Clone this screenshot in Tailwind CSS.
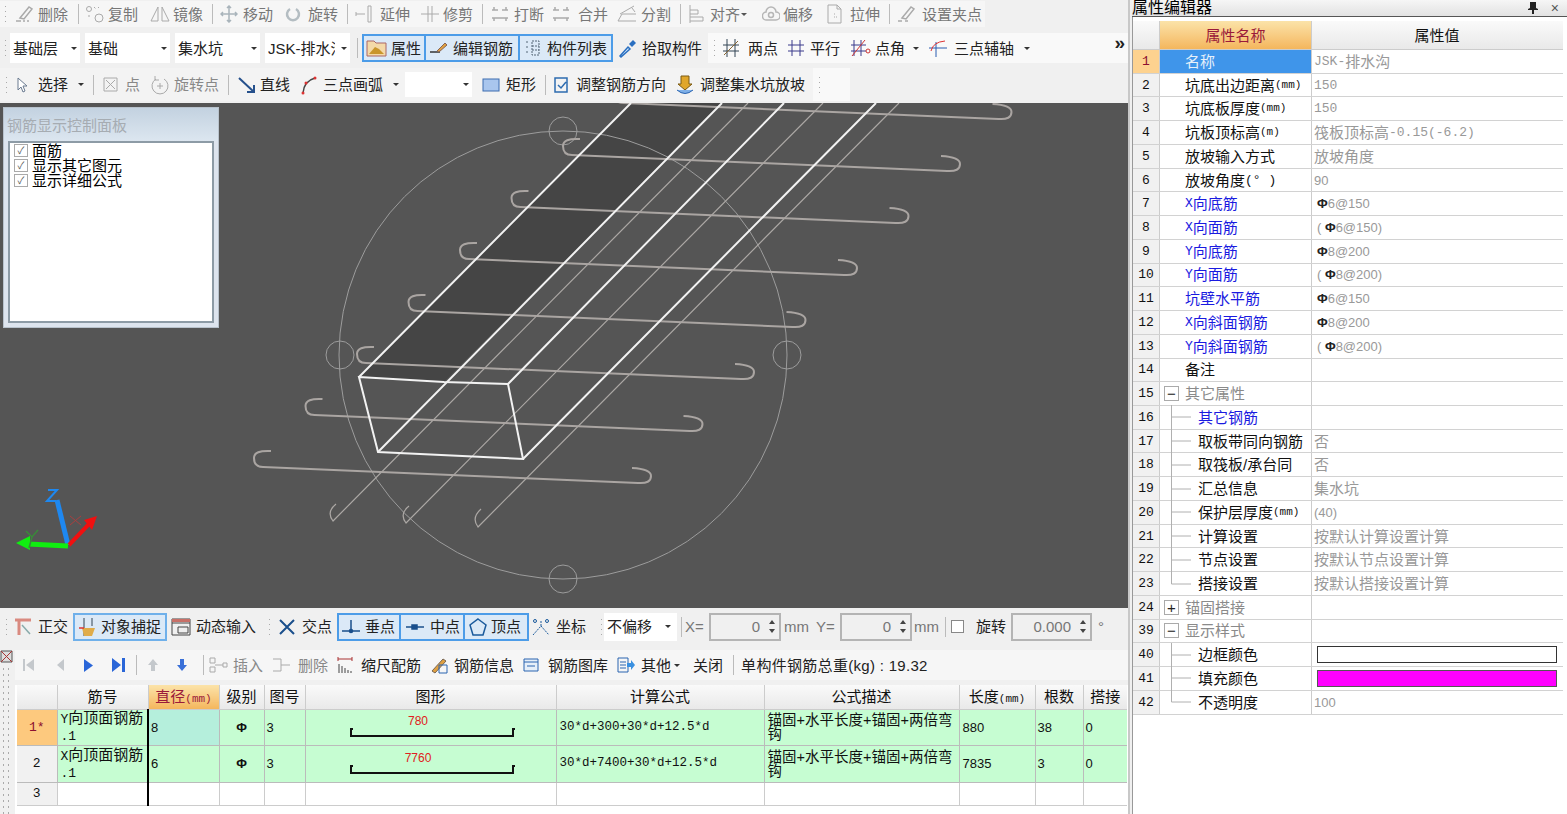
<!DOCTYPE html>
<html lang="zh-CN">
<head>
<meta charset="UTF-8">
<title>属性编辑器</title>
<script src="https://cdn.jsdelivr.net/npm/@tailwindcss/browser@4"></script>
</head>
<body class="w-[1567px] h-[814px] overflow-hidden bg-[#f0f0f0] text-[15px] leading-none text-[#222] font-['Liberation_Sans','Noto_Sans_CJK_SC',sans-serif]">
<div class="flex h-full">

<!-- left: toolbars, view, rebar table -->
<div class="w-[1128px] h-full flex flex-col shrink-0">

  <!-- toolbar 1 -->
  <div class="h-[33px] shrink-0 pt-[1px]">
    <div class="flex items-center h-[26px] w-[985px] bg-[#f6f6f6] text-[#777]">
      <div class="w-[15px] pl-[4px]"><div class="w-[3px] h-[20px] bg-[radial-gradient(circle,#aaa_1px,transparent_1px)] bg-[length:3px_5px]"></div></div>
      <div class="flex items-center w-[63px]"><svg width="20" height="20" viewBox="0 0 20 20" fill="none" stroke="#aaa" stroke-width="1.5"><path d="M1 17h5M8 17h2M12 17h2M5 14l9-11 3 2-8 10z"/></svg><span class="ml-[3px]">删除</span></div>
      <i class="w-[7px] h-[20px] border-l border-[#bbb]"></i>
      <div class="flex items-center w-[64px]"><svg width="20" height="20" viewBox="0 0 20 20" fill="none" stroke="#aaa"><circle cx="4" cy="5" r="2.5"/><circle cx="14" cy="14" r="4"/><path d="M9 3l2 2M13 3l1 1M4 11v3" stroke-dasharray="2 1"/></svg><span class="ml-[3px]">复制</span></div>
      <div class="flex items-center w-[63px]"><svg width="22" height="20" viewBox="0 0 22 20" fill="none" stroke="#aaa"><path d="M9 3L2 17h7zM13 3l7 14h-7z"/></svg><span class="ml-[2px]">镜像</span></div>
      <i class="w-[8px] h-[20px] border-l border-[#bbb]"></i>
      <div class="flex items-center w-[65px]"><svg width="18" height="18" viewBox="0 0 18 18" fill="none" stroke="#a9b4bb" stroke-width="1.5"><path d="M9 1v16M1 9h16M7 3l2-2 2 2M7 15l2 2 2-2M3 7L1 9l2 2M15 7l2 2-2 2"/></svg><span class="ml-[5px]">移动</span></div>
      <div class="flex items-center w-[62px]"><svg width="16" height="18" viewBox="0 0 16 18" fill="none" stroke="#b4bdc2" stroke-width="2.5"><path d="M5 4a6 6 0 1 0 6 0"/></svg><span class="ml-[7px]">旋转</span></div>
      <i class="w-[8px] h-[20px] border-l border-[#bbb]"></i>
      <div class="flex items-center w-[65px]"><svg width="18" height="20" viewBox="0 0 18 20" fill="none" stroke="#aaa"><path d="M1 10h9M1 8v4M13 2h3v16h-3z"/></svg><span class="ml-[7px]">延伸</span></div>
      <div class="flex items-center w-[62px]"><svg width="20" height="20" viewBox="0 0 20 20" fill="none" stroke="#aaa"><path d="M1 10h18M8 2v16M12 2v16"/></svg><span class="ml-[3px]">修剪</span></div>
      <i class="w-[8px] h-[20px] border-l border-[#bbb]"></i>
      <div class="flex items-center w-[60px]"><svg width="20" height="20" viewBox="0 0 20 20" fill="none" stroke="#aaa" stroke-width="1.5"><path d="M2 6h6M12 6h6M2 14h16M4 3v3M16 3v3M4 14v3M16 14v3"/></svg><span class="ml-[4px]">打断</span></div>
      <div class="flex items-center w-[67px]"><svg width="22" height="20" viewBox="0 0 22 20" fill="none" stroke="#aaa" stroke-width="1.5"><path d="M3 6h6M13 6h6M3 14h16M5 3v3M17 3v3M5 14v3M17 14v3"/></svg><span class="ml-[6px]">合并</span></div>
      <div class="flex items-center w-[63px]"><svg width="20" height="20" viewBox="0 0 20 20" fill="none" stroke="#aaa"><path d="M1 17h18M1 17l4-7h14M3 10l14-8M15 4l3 4"/></svg><span class="ml-[4px]">分割</span></div>
      <i class="w-[8px] h-[20px] border-l border-[#bbb]"></i>
      <div class="flex items-center w-[74px]"><svg width="16" height="20" viewBox="0 0 16 20" fill="none" stroke="#aaa"><path d="M2 1v18M2 6h8v4H2M2 13h13v4H2"/></svg><span class="ml-[6px]">对齐</span><i class="ml-[1px] border-x-[3px] border-t-[3px] border-x-transparent border-t-[#555]"></i></div>
      <div class="flex items-center w-[63px]"><svg width="18" height="18" viewBox="0 0 18 18" fill="none" stroke="#b6b6b6" stroke-width="1.5"><path d="M5 15a4 4 0 0 1-1-8 5 5 0 0 1 10 0 4 4 0 0 1 0 8z"/><circle cx="9" cy="10" r="2.5"/></svg><span class="ml-[3px]">偏移</span></div>
      <div class="flex items-center w-[64px]"><svg width="20" height="20" viewBox="0 0 20 20" fill="none" stroke="#aaa"><path d="M3 1h9l4 4v14H3zM12 1v4h4"/><path d="M9 10h2M9 13h4" stroke-dasharray="1 1"/></svg><span class="ml-[5px]">拉伸</span></div>
      <i class="w-[8px] h-[20px] border-l border-[#bbb]"></i>
      <div class="flex items-center"><svg width="20" height="20" viewBox="0 0 20 20" fill="none" stroke="#aaa" stroke-width="1.5"><path d="M1 17h4M8 17h3M5 14l9-11 3 2-8 10z"/></svg><span class="ml-[5px]">设置夹点</span></div>
    </div>
  </div>

  <!-- toolbar 2 -->
  <div class="h-[33px] shrink-0 flex items-start">
    <div class="flex items-center h-[30px] w-[708px] shrink-0 bg-[#f0f0f0]">
      <div class="w-[10px] pl-[4px]"><div class="w-[3px] h-[20px] bg-[radial-gradient(circle,#aaa_1px,transparent_1px)] bg-[length:3px_5px]"></div></div>
      <div class="flex items-center justify-between w-[70px] h-[30px] pl-[3px] pr-[3px] bg-white">基础层<i class="border-x-[3px] border-t-[3px] border-x-transparent border-t-[#333]"></i></div>
      <div class="flex items-center justify-between w-[85px] h-[30px] ml-[5px] pl-[3px] pr-[3px] bg-white">基础<i class="border-x-[3px] border-t-[3px] border-x-transparent border-t-[#333]"></i></div>
      <div class="flex items-center justify-between w-[85px] h-[30px] ml-[5px] pl-[3px] pr-[3px] bg-white">集水坑<i class="border-x-[3px] border-t-[3px] border-x-transparent border-t-[#333]"></i></div>
      <div class="flex items-center justify-between w-[85px] h-[30px] ml-[5px] pl-[3px] pr-[3px] bg-white"><span class="w-[67px] overflow-hidden whitespace-nowrap">JSK-排水沟</span><i class="border-x-[3px] border-t-[3px] border-x-transparent border-t-[#333]"></i></div>
      <i class="w-[5px] ml-[7px] h-[20px] border-l border-[#bbb]"></i>
      <div class="flex items-center w-[64px] h-[28px] border-2 border-[#4c9ce8] bg-[#dbe9f7] pl-[2px] whitespace-nowrap"><svg class="shrink-0" width="22" height="20" viewBox="0 0 22 20"><path d="M1 3h7l2 2h10v13H1z" fill="#f4d9a8" stroke="#a66"/><path d="M3 16l6-7 4 2 5 5z" fill="#c9962c"/></svg><span class="ml-[3px]">属性</span></div>
      <div class="flex items-center w-[94px] h-[28px] border-2 border-l-0 border-[#4c9ce8] bg-[#dbe9f7] pl-[3px]"><svg width="20" height="18" viewBox="0 0 20 18" fill="none"><path d="M1 13h10" stroke="#333" stroke-width="1.5"/><path d="M8 12l8-8 2 2-8 7z" fill="#e0a040" stroke="#865"/></svg><span class="ml-[4px]">编辑钢筋</span></div>
      <div class="flex items-center w-[93px] h-[28px] border-2 border-l-0 border-[#4c9ce8] bg-[#dbe9f7] pl-[3px]"><svg width="20" height="18" viewBox="0 0 20 18" fill="none" stroke="#567"><path d="M9 2h7v14H9zM9 7h7M9 11h7M3 3h3M3 8h3M3 13h3" stroke-dasharray="2 1"/></svg><span class="ml-[4px]">构件列表</span></div>
      <div class="flex items-center ml-[5px]"><svg width="20" height="20" viewBox="0 0 20 20" fill="none"><path d="M2 18l8-9 2 2-9 8z" fill="#cfe6fa" stroke="#2a6fc0" stroke-width="1.5"/><path d="M11 6l4-4 3 3-4 4z" fill="#2a6fc0"/></svg><span class="ml-[4px]">拾取构件</span></div>
    </div>
    <div class="flex items-center h-[30px] flex-1 bg-[#f9f9f9]">
      <div class="w-[14px] pl-[5px]"><div class="w-[3px] h-[20px] bg-[radial-gradient(circle,#aaa_1px,transparent_1px)] bg-[length:3px_5px]"></div></div>
      <div class="flex items-center w-[65px]"><svg width="18" height="20" viewBox="0 0 18 20" fill="none" stroke="#345"><path d="M5 1v18M13 1v18M1 7h16M1 13h16"/><path d="M2 17L16 3" stroke="#863"/></svg><span class="ml-[8px]">两点</span></div>
      <div class="flex items-center w-[63px]"><svg width="18" height="20" viewBox="0 0 18 20" fill="none" stroke="#3a3a8c"><path d="M5 2v16M13 2v16M1 7h16M1 13h16"/></svg><span class="ml-[5px]">平行</span></div>
      <div class="flex items-center w-[78px]"><svg width="22" height="20" viewBox="0 0 22 20" fill="none" stroke="#3a3a8c"><path d="M4 2v16M11 2v16M1 7h15M1 13h15"/><path d="M2 18L15 2" stroke="#c33"/><circle cx="18" cy="13" r="2" stroke="#c33"/></svg><span class="ml-[3px]">点角</span><i class="ml-[8px] border-x-[3px] border-t-[3px] border-x-transparent border-t-[#333]"></i></div>
      <div class="flex items-center"><svg width="20" height="20" viewBox="0 0 20 20" fill="none"><path d="M8 4v15M1 10h18" stroke="#2a5db0"/><path d="M3 13Q5 4 17 3" stroke="#d33"/></svg><span class="ml-[6px]">三点辅轴</span><i class="ml-[10px] border-x-[3px] border-t-[3px] border-x-transparent border-t-[#333]"></i></div>
      <span class="ml-auto mr-[3px] mb-[12px] text-[19px] font-bold">»</span>
    </div>
  </div>

  <!-- toolbar 3 -->
  <div class="h-[37px] shrink-0 flex items-center bg-[#f0f0f0]">
    <div class="flex items-center w-[850px] h-[33px] bg-[#f3f3f3]">
      <div class="w-[15px] pl-[5px]"><div class="w-[3px] h-[20px] bg-[radial-gradient(circle,#aaa_1px,transparent_1px)] bg-[length:3px_5px]"></div></div>
      <div class="flex items-center w-[78px]"><svg width="14" height="18" viewBox="0 0 14 18" fill="#fff" stroke="#6a7a90"><path d="M3 2v12l3-3 2 5 2-1-2-5h4z"/></svg><span class="ml-[9px]">选择</span><i class="ml-[10px] border-x-[3px] border-t-[3px] border-x-transparent border-t-[#333]"></i></div>
      <i class="w-[10px] h-[20px] border-l border-[#bbb]"></i>
      <div class="flex items-center w-[47px] text-[#888]"><svg width="15" height="15" viewBox="0 0 15 15" fill="none" stroke="#aaa"><path d="M1 1h13v13H1zM3 3l9 9M12 3l-9 9"/></svg><span class="ml-[7px]">点</span></div>
      <div class="flex items-center w-[78px] text-[#888]"><svg width="20" height="20" viewBox="0 0 20 20" fill="none" stroke="#aaa"><path d="M6 4a8 8 0 1 0 8 0M5 1v4h4M7 11h6M10 8v6"/></svg><span class="ml-[4px]">旋转点</span></div>
      <i class="w-[10px] h-[20px] border-l border-[#bbb]"></i>
      <div class="flex items-center w-[62px]"><svg width="18" height="18" viewBox="0 0 18 18" fill="none" stroke="#25508c" stroke-width="2"><path d="M1 2l15 14M16 9v7H9"/></svg><span class="ml-[4px]">直线</span></div>
      <div class="flex items-center w-[105px]"><svg width="18" height="20" viewBox="0 0 18 20" fill="none"><path d="M3 18Q4 6 15 3" stroke="#444" stroke-width="1.5"/><circle cx="3" cy="18" r="1.5" fill="#d33"/><circle cx="6" cy="8" r="1.5" fill="#d33"/><circle cx="15" cy="3" r="1.5" fill="#d33"/></svg><span class="ml-[5px]">三点画弧</span><i class="ml-[10px] border-x-[3px] border-t-[3px] border-x-transparent border-t-[#333]"></i></div>
      <div class="flex items-center justify-end w-[67px] h-[25px] pr-[3px] bg-white"><i class="border-x-[3px] border-t-[3px] border-x-transparent border-t-[#333]"></i></div>
      <div class="flex items-center w-[63px] ml-[10px]"><svg width="18" height="14" viewBox="0 0 18 14"><rect x="1" y="1" width="16" height="12" fill="#a9c6ee" stroke="#3d6db0"/></svg><span class="ml-[6px]">矩形</span></div>
      <i class="w-[7px] h-[20px] border-l border-[#bbb]"></i>
      <div class="flex items-center w-[123px]"><svg width="18" height="20" viewBox="0 0 18 20" fill="none" stroke="#2e6cb0" stroke-width="1.5"><path d="M3 3h12v14H3zM6 10l3 3 5-6"/></svg><span class="ml-[6px]">调整钢筋方向</span></div>
      <div class="flex items-center"><svg width="20" height="20" viewBox="0 0 20 20"><path d="M6 1h8v8h3l-7 6-7-6h3z" fill="#e0a62a" stroke="#7a5a12"/><path d="M2 15q8 7 16 0" fill="#7fb0e8" stroke="#2a64b0"/></svg><span class="ml-[5px]">调整集水坑放坡</span></div>
      <div class="ml-[8px] flex items-center flex-1 h-[33px] pl-[5px] bg-[#f9f9f9]"><div class="w-[3px] h-[20px] bg-[radial-gradient(circle,#aaa_1px,transparent_1px)] bg-[length:3px_5px]"></div></div>
    </div>
  </div>

  <!-- 3D view -->
  <div class="relative h-[505px] shrink-0 bg-[#555555] overflow-hidden">
    <svg class="block" width="1128" height="505" viewBox="0 103 1128 505" fill="none">
      <path d="M359 377L444 382L722 103H631Z" fill="#454545"/>
      <g stroke="#9c9c9c">
        <circle cx="563" cy="355" r="224"/>
        <ellipse cx="563" cy="131" rx="14" ry="14"/>
        <ellipse cx="340" cy="355" rx="14" ry="14"/>
        <ellipse cx="787" cy="355" rx="14" ry="14"/>
        <ellipse cx="563" cy="579" rx="14" ry="14"/>
      </g>
      <g stroke="#aca8a5" stroke-width="1.2">
        <path d="M748 103L333 521Q326 512 336 504"/>
        <path d="M823 103L406 523Q399 514 409 506"/>
        <path d="M899 103L478 527Q471 518 481 509"/>
      </g>
      <g stroke="#aaa5a2" stroke-width="2">
        <path d="M271 451Q254 450 254 458Q254 467 263 467L638 483Q651 484 651 476Q651 469 632 468"/>
        <path d="M271 451Q254 450 254 458Q254 467 263 467L638 483Q651 484 651 476Q651 469 632 468" transform="translate(51.5 -52)"/>
        <path d="M271 451Q254 450 254 458Q254 467 263 467L638 483Q651 484 651 476Q651 469 632 468" transform="translate(103 -104)"/>
        <path d="M271 451Q254 450 254 458Q254 467 263 467L638 483Q651 484 651 476Q651 469 632 468" transform="translate(154.5 -156)"/>
        <path d="M271 451Q254 450 254 458Q254 467 263 467L638 483Q651 484 651 476Q651 469 632 468" transform="translate(206 -208)"/>
        <path d="M271 451Q254 450 254 458Q254 467 263 467L638 483Q651 484 651 476Q651 469 632 468" transform="translate(257.5 -260)"/>
        <path d="M271 451Q254 450 254 458Q254 467 263 467L638 483Q651 484 651 476Q651 469 632 468" transform="translate(309 -312)"/>
        <path d="M271 451Q254 450 254 458Q254 467 263 467L638 483Q651 484 651 476Q651 469 632 468" transform="translate(360.5 -364)"/>
      </g>
      <g stroke="#f2f2f2" stroke-width="2">
        <path d="M359 377L444 382L508 384L523 459L378 452Z"/>
        <path d="M359 377L631 103M378 452L722 103M508 384L784 103M523 459L876 103"/>
      </g>
      <path d="M68 545L57 500" stroke="#1e88f0" stroke-width="5"/>
      <path d="M48 490h9l-10 11h9" stroke="#1e88f0" stroke-width="2"/>
      <path d="M69 545L90 523" stroke="#f01010" stroke-width="4"/>
      <path d="M97 516L84 520L92 530Z" fill="#f01010"/>
      <path d="M70 516L81 525M81 516L70 525" stroke="#a84040"/>
      <path d="M68 546L28 544" stroke="#10ee10" stroke-width="5"/>
      <path d="M16 543L30 536V550Z" fill="#10ee10"/>
      <path d="M26 531L32 537L38 530M32 537L29 548" stroke="#3a8a3a" stroke-width="1.5"/>
    </svg>
    <!-- floating panel -->
    <div class="absolute left-[3px] top-[4px] w-[216px] h-[221px] border border-[#b8c2cc] bg-[#dde4ee] flex flex-col">
      <div class="h-[33px] shrink-0 flex items-center pl-[3px] pt-[2px] bg-gradient-to-b from-[#c3d2e0] to-[#dce6f0] text-[#a6acb2]">钢筋显示控制面板</div>
      <div class="mx-[4px] mb-[4px] flex-1 bg-white border-2 border-[#8d9ba6] pl-[4px] text-black leading-[15px]">
        <div class="flex items-center h-[15px]"><span class="w-[14px] h-[13px] border border-[#aaa] text-[#555] text-[10px] leading-[12px] text-center">✓</span><span class="ml-[4px]">面筋</span></div>
        <div class="flex items-center h-[15px]"><span class="w-[14px] h-[13px] border border-[#aaa] text-[#555] text-[10px] leading-[12px] text-center">✓</span><span class="ml-[4px]">显示其它图元</span></div>
        <div class="flex items-center h-[15px]"><span class="w-[14px] h-[13px] border border-[#aaa] text-[#555] text-[10px] leading-[12px] text-center">✓</span><span class="ml-[4px]">显示详细公式</span></div>
      </div>
    </div>
  </div>

  <!-- snap toolbar -->
  <div class="h-[37px] shrink-0 flex items-center text-[#222]">
    <div class="w-[13px] pl-[5px]"><div class="w-[3px] h-[20px] bg-[radial-gradient(circle,#aaa_1px,transparent_1px)] bg-[length:3px_5px]"></div></div>
    <div class="flex items-center w-[60px]"><svg width="20" height="20" viewBox="0 0 20 20" fill="none"><path d="M2 3h16M6 3v15" stroke="#d98a80" stroke-width="3"/><path d="M9 8l8 9" stroke="#8aa" stroke-width="1.5"/></svg><span class="ml-[5px]">正交</span></div>
    <div class="flex items-center w-[94px] h-[28px] border-2 border-[#6fb0ea] bg-[#dbe9f7] pl-[3px]"><svg width="20" height="20" viewBox="0 0 20 20" fill="none"><path d="M6 1v18M14 1v8" stroke="#345"/><path d="M4 11h13l-3 8H6z" fill="#e0ac4a"/><path d="M1 11h5" stroke="#d33" stroke-width="1.5"/></svg><span class="ml-[3px]">对象捕捉</span></div>
    <div class="flex items-center w-[97px] ml-[4px]"><svg width="20" height="20" viewBox="0 0 20 20" fill="none" stroke="#444"><path d="M1 2h18v16H1zM1 6h18" /><path d="M7 10h10v6H7z" fill="#eee"/><path d="M1 2h18v3H1z" fill="#c87068" stroke="none"/></svg><span class="ml-[5px]">动态输入</span></div>
    <div class="w-[9px]"><div class="w-[3px] h-[20px] bg-[radial-gradient(circle,#aaa_1px,transparent_1px)] bg-[length:3px_5px]"></div></div>
    <div class="flex items-center w-[60px]"><svg width="20" height="20" viewBox="0 0 20 20" fill="none" stroke="#1a4f8c" stroke-width="2"><path d="M3 3l14 14M17 3L3 17"/></svg><span class="ml-[5px]">交点</span></div>
    <div class="flex items-center w-[64px] h-[28px] border-2 border-[#4c9ce8] bg-[#dbe9f7] pl-[2px]"><svg width="20" height="20" viewBox="0 0 20 20" fill="none" stroke="#1a4f8c" stroke-width="1.5"><path d="M1 14h18M10 3v11"/><circle cx="10" cy="14" r="1.5" fill="#1a4f8c"/></svg><span class="ml-[4px]">垂点</span></div>
    <div class="flex items-center w-[64px] h-[28px] border-2 border-l-0 border-[#4c9ce8] bg-[#dbe9f7] pl-[4px]"><svg width="20" height="20" viewBox="0 0 20 20" fill="none" stroke="#1a4f8c" stroke-width="1.5"><path d="M1 10h18"/><rect x="7" y="8" width="5" height="4" fill="#1a4f8c"/></svg><span class="ml-[5px]">中点</span></div>
    <div class="flex items-center w-[64px] h-[28px] border-2 border-l-0 border-[#4c9ce8] bg-[#dbe9f7] pl-[4px]"><svg width="18" height="18" viewBox="0 0 18 18" fill="none" stroke="#1a5a9c" stroke-width="1.5"><path d="M9 1l8 6-3 10H4L1 7z"/></svg><span class="ml-[4px]">顶点</span></div>
    <div class="flex items-center w-[69px] ml-[2px]"><svg width="20" height="20" viewBox="0 0 20 20" fill="none" stroke="#1a5a9c"><path d="M2 18L10 9l8 9M10 9V3" stroke-dasharray="2 1"/><circle cx="4" cy="4" r="1.5"/><circle cx="16" cy="4" r="1.5"/></svg><span class="ml-[5px]">坐标</span></div>
    <div class="w-[4px]"><div class="w-[3px] h-[20px] bg-[radial-gradient(circle,#aaa_1px,transparent_1px)] bg-[length:3px_5px]"></div></div>
    <div class="flex items-center justify-between w-[73px] h-[28px] bg-white pl-[3px] pr-[6px]">不偏移<i class="border-x-[3px] border-t-[3px] border-x-transparent border-t-[#333]"></i></div>
    <i class="w-[4px] ml-[4px] h-[20px] border-l border-[#bbb]"></i>
    <span class="w-[24px] text-[#777]">X=</span>
    <div class="flex items-center justify-end w-[72px] h-[28px] border-2 border-[#b4b4b4] bg-[#f0f0f0] text-[#777] pr-[4px]">0<span class="ml-[9px] flex flex-col gap-[5px]"><i class="block border-x-[3px] border-b-[4px] border-x-transparent border-b-[#444]"></i><i class="block border-x-[3px] border-t-[4px] border-x-transparent border-t-[#444]"></i></span></div>
    <span class="w-[33px] pl-[3px] text-[#777]">mm</span>
    <span class="w-[26px] pl-[2px] text-[#777]">Y=</span>
    <div class="flex items-center justify-end w-[72px] h-[28px] border-2 border-[#b4b4b4] bg-[#f0f0f0] text-[#777] pr-[4px]">0<span class="ml-[9px] flex flex-col gap-[5px]"><i class="block border-x-[3px] border-b-[4px] border-x-transparent border-b-[#444]"></i><i class="block border-x-[3px] border-t-[4px] border-x-transparent border-t-[#444]"></i></span></div>
    <span class="w-[33px] pl-[2px] text-[#777]">mm</span>
    <i class="w-[6px] h-[20px] border-l border-[#bbb]"></i>
    <span class="w-[13px] h-[13px] border border-[#888] bg-white"></span>
    <span class="ml-[12px]">旋转</span>
    <div class="flex items-center justify-end w-[81px] ml-[5px] h-[28px] border-2 border-[#b4b4b4] bg-[#f0f0f0] text-[#777] pr-[4px]">0.000<span class="ml-[9px] flex flex-col gap-[5px]"><i class="block border-x-[3px] border-b-[4px] border-x-transparent border-b-[#444]"></i><i class="block border-x-[3px] border-t-[4px] border-x-transparent border-t-[#444]"></i></span></div>
    <span class="ml-[6px] text-[#777]">°</span>
  </div>

  <!-- rebar area -->
  <div class="flex flex-1 min-h-0">
    <div class="w-[15px] shrink-0 flex flex-col">
      <svg class="mt-[5px] shrink-0" width="13" height="14" viewBox="0 0 13 14" fill="none" stroke="#555"><path d="M1 1h11v11H1z" fill="#ddd"/><path d="M1 1l11 11M12 1L1 12" stroke="#a33"/></svg>
      <div class="ml-[1px] mt-[2px] flex-1 w-[10px] bg-[radial-gradient(circle,#aaa_1px,transparent_1px)] bg-[length:5px_6px]"></div>
    </div>
    <div class="flex-1 min-w-0 flex flex-col">
      <!-- rebar toolbar -->
      <div class="h-[40px] shrink-0 pt-[5px] flex items-start">
        <div class="flex items-center h-[30px] w-full bg-[#f6f6f6] text-[#222]">
          <svg class="ml-[8px]" width="11" height="14" viewBox="0 0 11 14" fill="#c4c8cc"><path d="M0 1h2v12H0zM11 1v12L3 7z"/></svg>
          <svg class="ml-[23px]" width="7" height="12" viewBox="0 0 7 12" fill="#c4c8cc"><path d="M7 0v12L0 6z"/></svg>
          <svg class="ml-[20px]" width="9" height="13" viewBox="0 0 9 13" fill="#2a66d8"><path d="M0 0v13l9-6.500z"/></svg>
          <svg class="ml-[19px]" width="13" height="14" viewBox="0 0 13 14" fill="#2a66d8"><path d="M0 0v14l9-7zM10 0h3v14h-3z"/></svg>
          <i class="ml-[11px] h-[20px] border-l border-[#bbb]"></i>
          <svg class="ml-[11px]" width="10" height="12" viewBox="0 0 10 12" fill="#c4c8cc"><path d="M5 0l5 6H7v6H3V6H0z"/></svg>
          <svg class="ml-[19px]" width="10" height="12" viewBox="0 0 10 12" fill="#3a70d8"><path d="M5 12l5-6H7V0H3v6H0z"/></svg>
          <i class="ml-[16px] h-[20px] border-l border-[#bbb]"></i>
          <div class="flex items-center ml-[5px] text-[#888]"><svg width="19" height="18" viewBox="0 0 19 18" fill="none" stroke="#aaa"><path d="M1 2h5v5H1zM1 11h5v5H1zM6 9h8M14 7h4v4h-4z"/></svg><span class="ml-[5px]">插入</span></div>
          <div class="flex items-center ml-[9px] text-[#888]"><svg width="22" height="18" viewBox="0 0 22 18" fill="none" stroke="#aaa"><path d="M1 3h8v12H1M9 9h9"/></svg><span class="ml-[4px]">删除</span></div>
          <div class="flex items-center ml-[9px]"><svg width="16" height="18" viewBox="0 0 16 18" fill="none" stroke="#444"><path d="M1 3h14M1 1v4M15 1v4" stroke="#a33"/><path d="M2 8v9M5 10v7M8 12v5M11 14v3M14 15v2"/></svg><span class="ml-[8px]">缩尺配筋</span></div>
          <div class="flex items-center ml-[9px]"><svg width="18" height="18" viewBox="0 0 18 18" fill="none"><path d="M2 15L13 3l3 2L5 17z" fill="#e0a040" stroke="#765"/><path d="M9 9h8v8H9z" stroke="#2a64b0"/></svg><span class="ml-[6px]">钢筋信息</span></div>
          <div class="flex items-center ml-[9px]"><svg width="16" height="16" viewBox="0 0 16 16" fill="none" stroke="#2a64b0"><path d="M1 2h14v12H1z" fill="#e6eff9"/><path d="M1 5h14M4 9h8"/></svg><span class="ml-[9px]">钢筋图库</span></div>
          <div class="flex items-center ml-[9px]"><svg width="18" height="16" viewBox="0 0 18 16" fill="none" stroke="#2a64b0"><path d="M1 1h10v14H1zM3 5h6M3 8h6M3 11h6"/><path d="M10 6h4V3l4 5-4 5v-3h-4z" fill="#3a90e0" stroke="none"/></svg><span class="ml-[6px]">其他</span><i class="ml-[3px] border-x-[3px] border-t-[3px] border-x-transparent border-t-[#333]"></i></div>
          <span class="ml-[13px]">关闭</span>
          <i class="ml-[10px] h-[20px] border-l border-[#bbb]"></i>
          <span class="ml-[7px] tracking-[0.3px]">单构件钢筋总重(kg) : 19.32</span>
        </div>
      </div>
      <!-- rebar table -->
      <div class="flex-1 min-h-0 bg-white pl-[2px]">
        <table class="table-fixed border-collapse w-[1110px] text-[#111]">
          <colgroup><col class="w-[40px]"><col class="w-[91px]"><col class="w-[71px]"><col class="w-[45px]"><col class="w-[41px]"><col class="w-[251px]"><col class="w-[208px]"><col class="w-[195px]"><col class="w-[76px]"><col class="w-[48px]"><col class="w-[44px]"></colgroup>
          <tr class="h-[24px] bg-gradient-to-b from-[#fafafa] to-[#e9e9e9] text-center font-normal">
            <td class="border-r border-b border-[#ccc]"></td>
            <td class="border-r border-b border-[#ccc]">筋号</td>
            <td class="border-r border-b border-[#ccc] bg-gradient-to-b from-[#fbe3a8] to-[#f4b65c] text-[#9a1a3a]">直径<span class="text-[11px] font-['Liberation_Mono']">(mm)</span></td>
            <td class="border-r border-b border-[#ccc]">级别</td>
            <td class="border-r border-b border-[#ccc]">图号</td>
            <td class="border-r border-b border-[#ccc]">图形</td>
            <td class="border-r border-b border-[#ccc]">计算公式</td>
            <td class="border-r border-b border-[#ccc]">公式描述</td>
            <td class="border-r border-b border-[#ccc]">长度<span class="text-[11px] font-['Liberation_Mono']">(mm)</span></td>
            <td class="border-r border-b border-[#ccc]">根数</td>
            <td class="border-b border-[#ccc]">搭接</td>
          </tr>
          <tr class="h-[36px] bg-[#c6fdd2] text-[13px]">
            <td class="border-r border-b border-[#bbb] bg-[#fdc97e] text-[#8c1030] text-center font-['Liberation_Mono']">1*</td>
            <td class="border-r-2 border-b border-r-black border-b-[#bbb] pl-[3px] text-[15px] leading-[15px]"><span class="text-[13px] font-['Liberation_Mono']">Y</span>向顶面钢筋<br><span class="text-[13px] font-['Liberation_Mono']">.1</span></td>
            <td class="border-r border-b border-[#bbb] bg-[#b5efdc] pl-[2px]">8</td>
            <td class="border-r border-b border-[#bbb] text-center font-bold">Φ</td>
            <td class="border-r border-b border-[#bbb] pl-[2px]">3</td>
            <td class="border-r border-b border-[#bbb] text-center">
              <div class="relative h-[30px]"><span class="block text-[12px] text-[#e02020] pt-[3px] pr-[25px]">780</span>
              <svg class="absolute left-[44px] top-[15px]" width="166" height="10" viewBox="0 0 166 10" fill="none" stroke="#111" stroke-width="2"><path d="M3 2H1V9H163V2H165"/></svg></div>
            </td>
            <td class="border-r border-b border-[#bbb] pl-[3px] font-['Liberation_Mono'] text-[12.5px]">30*d+300+30*d+12.5*d</td>
            <td class="border-r border-b border-[#bbb] pl-[3px] text-[14.5px] leading-[14px] whitespace-nowrap overflow-hidden">锚固+水平长度+锚固+两倍弯<br>钩</td>
            <td class="border-r border-b border-[#bbb] pl-[3px]">880</td>
            <td class="border-r border-b border-[#bbb] pl-[2px]">38</td>
            <td class="border-b border-[#bbb] pl-[2px]">0</td>
          </tr>
          <tr class="h-[37px] bg-[#c6fdd2] text-[13px]">
            <td class="border-r border-b border-[#bbb] bg-[#f1f1f1] text-center font-['Liberation_Mono']">2</td>
            <td class="border-r-2 border-b border-r-black border-b-[#bbb] pl-[3px] text-[15px] leading-[15px]"><span class="text-[13px] font-['Liberation_Mono']">X</span>向顶面钢筋<br><span class="text-[13px] font-['Liberation_Mono']">.1</span></td>
            <td class="border-r border-b border-[#bbb] pl-[2px]">6</td>
            <td class="border-r border-b border-[#bbb] text-center font-bold">Φ</td>
            <td class="border-r border-b border-[#bbb] pl-[2px]">3</td>
            <td class="border-r border-b border-[#bbb] text-center">
              <div class="relative h-[30px]"><span class="block text-[12px] text-[#e02020] pt-[3px] pr-[25px]">7760</span>
              <svg class="absolute left-[44px] top-[15px]" width="166" height="10" viewBox="0 0 166 10" fill="none" stroke="#111" stroke-width="2"><path d="M3 2H1V9H163V2H165"/></svg></div>
            </td>
            <td class="border-r border-b border-[#bbb] pl-[3px] font-['Liberation_Mono'] text-[12.5px]">30*d+7400+30*d+12.5*d</td>
            <td class="border-r border-b border-[#bbb] pl-[3px] text-[14.5px] leading-[14px] whitespace-nowrap overflow-hidden">锚固+水平长度+锚固+两倍弯<br>钩</td>
            <td class="border-r border-b border-[#bbb] pl-[3px]">7835</td>
            <td class="border-r border-b border-[#bbb] pl-[2px]">3</td>
            <td class="border-b border-[#bbb] pl-[2px]">0</td>
          </tr>
          <tr class="h-[23px] text-[13px]">
            <td class="border-r border-b border-[#ccc] bg-[#f1f1f1] text-center font-['Liberation_Mono']">3</td>
            <td class="border-r-2 border-b border-r-black border-b-[#ccc]"></td>
            <td class="border-r border-b border-[#ccc]"></td>
            <td class="border-r border-b border-[#ccc]"></td>
            <td class="border-r border-b border-[#ccc]"></td>
            <td class="border-r border-b border-[#ccc]"></td>
            <td class="border-r border-b border-[#ccc]"></td>
            <td class="border-r border-b border-[#ccc]"></td>
            <td class="border-r border-b border-[#ccc]"></td>
            <td class="border-r border-b border-[#ccc]"></td>
            <td class="border-b border-[#ccc]"></td>
          </tr>
        </table>
      </div>
    </div>
  </div>
</div>

<!-- right: property editor -->
<div class="w-[439px] h-full pl-[2px] border-l-2 border-[#c8c8c8] flex flex-col">
  <div class="h-[17px] shrink-0 flex items-center bg-gradient-to-b from-[#f6f6f6] to-[#e2e2e2] border-b border-[#555] text-[16px] text-black">
    <span>属性编辑器</span>
    <svg class="ml-auto" width="10" height="12" viewBox="0 0 10 12" fill="#222"><path d="M2 0h6v6l2 1v1H6v4H4V8H0V7l2-1z"/></svg>
    <span class="ml-[13px] mr-[8px] text-[#555] text-[14px]">×</span>
  </div>
  <div class="flex-1 min-h-0 bg-white border-l border-[#999] pt-[4px] text-[#111]">
    <div class="flex h-[29px] w-[430px] border-b border-[#ccc] text-center items-stretch bg-gradient-to-b from-[#fafafa] to-[#e9e9e9]">
      <div class="w-[27px] border-r border-[#ccc]"></div>
      <div class="w-[152px] border-r border-[#ccc] flex items-center justify-center bg-gradient-to-b from-[#fbe3a8] to-[#f4b65c] text-[#9a1a3a]">属性名称</div>
      <div class="w-[250px] flex items-center justify-center">属性值</div>
    </div>
    <div class="flex h-[23.74px] w-[430px] border-b border-[#d2d2d2] items-stretch"><div class="w-[27px] bg-[#fdd28f] text-[#8c1030] border-r border-[#ccc] flex items-center justify-center text-[13px] font-['Liberation_Mono']">1</div><div class="w-[152px] bg-[#3f95ea] text-[#e6f0fa] border-r border-[#ccc] flex items-center pl-[25px]">名称</div><div class="w-[250px] flex items-center pl-[2px] text-[#999]"><span class="text-[13px] font-['Liberation_Mono']">JSK-</span>排水沟</div></div>
    <div class="flex h-[23.74px] w-[430px] border-b border-[#d2d2d2] items-stretch"><div class="w-[27px] bg-[#f1f1f1] border-r border-[#ccc] flex items-center justify-center text-[13px] font-['Liberation_Mono']">2</div><div class="w-[152px] border-r border-[#ccc] flex items-center pl-[25px]">坑底出边距离<span class="text-[11px] font-['Liberation_Mono']">(mm)</span></div><div class="w-[250px] flex items-center pl-[2px] text-[#999] text-[13px] font-['Liberation_Mono']">150</div></div>
    <div class="flex h-[23.74px] w-[430px] border-b border-[#d2d2d2] items-stretch"><div class="w-[27px] bg-[#f1f1f1] border-r border-[#ccc] flex items-center justify-center text-[13px] font-['Liberation_Mono']">3</div><div class="w-[152px] border-r border-[#ccc] flex items-center pl-[25px]">坑底板厚度<span class="text-[11px] font-['Liberation_Mono']">(mm)</span></div><div class="w-[250px] flex items-center pl-[2px] text-[#999] text-[13px] font-['Liberation_Mono']">150</div></div>
    <div class="flex h-[23.74px] w-[430px] border-b border-[#d2d2d2] items-stretch"><div class="w-[27px] bg-[#f1f1f1] border-r border-[#ccc] flex items-center justify-center text-[13px] font-['Liberation_Mono']">4</div><div class="w-[152px] border-r border-[#ccc] flex items-center pl-[25px]">坑板顶标高<span class="text-[11px] font-['Liberation_Mono']">(m)</span></div><div class="w-[250px] flex items-center pl-[2px] text-[#999]">筏板顶标高<span class="text-[13px] font-['Liberation_Mono']">-0.15(-6.2)</span></div></div>
    <div class="flex h-[23.74px] w-[430px] border-b border-[#d2d2d2] items-stretch"><div class="w-[27px] bg-[#f1f1f1] border-r border-[#ccc] flex items-center justify-center text-[13px] font-['Liberation_Mono']">5</div><div class="w-[152px] border-r border-[#ccc] flex items-center pl-[25px]">放坡输入方式</div><div class="w-[250px] flex items-center pl-[2px] text-[#999]">放坡角度</div></div>
    <div class="flex h-[23.74px] w-[430px] border-b border-[#d2d2d2] items-stretch"><div class="w-[27px] bg-[#f1f1f1] border-r border-[#ccc] flex items-center justify-center text-[13px] font-['Liberation_Mono']">6</div><div class="w-[152px] border-r border-[#ccc] flex items-center pl-[25px]">放坡角度<span class="text-[13px] font-['Liberation_Mono'] whitespace-pre">(° )</span></div><div class="w-[250px] flex items-center pl-[2px] text-[#999] text-[13px]">90</div></div>
    <div class="flex h-[23.74px] w-[430px] border-b border-[#d2d2d2] items-stretch"><div class="w-[27px] bg-[#f1f1f1] border-r border-[#ccc] flex items-center justify-center text-[13px] font-['Liberation_Mono']">7</div><div class="w-[152px] border-r border-[#ccc] flex items-center pl-[25px] text-[#1a1ae0]"><span class="text-[13px] font-['Liberation_Mono']">X</span>向底筋</div><div class="w-[250px] flex items-center pl-[5px] text-[#999] text-[13px]"><b class="text-[#222]">Φ</b>6@150</div></div>
    <div class="flex h-[23.74px] w-[430px] border-b border-[#d2d2d2] items-stretch"><div class="w-[27px] bg-[#f1f1f1] border-r border-[#ccc] flex items-center justify-center text-[13px] font-['Liberation_Mono']">8</div><div class="w-[152px] border-r border-[#ccc] flex items-center pl-[25px] text-[#1a1ae0]"><span class="text-[13px] font-['Liberation_Mono']">X</span>向面筋</div><div class="w-[250px] flex items-center pl-[5px] text-[#999] text-[13px] whitespace-pre">( <b class="text-[#222]">Φ</b>6@150)</div></div>
    <div class="flex h-[23.74px] w-[430px] border-b border-[#d2d2d2] items-stretch"><div class="w-[27px] bg-[#f1f1f1] border-r border-[#ccc] flex items-center justify-center text-[13px] font-['Liberation_Mono']">9</div><div class="w-[152px] border-r border-[#ccc] flex items-center pl-[25px] text-[#1a1ae0]"><span class="text-[13px] font-['Liberation_Mono']">Y</span>向底筋</div><div class="w-[250px] flex items-center pl-[5px] text-[#999] text-[13px]"><b class="text-[#222]">Φ</b>8@200</div></div>
    <div class="flex h-[23.74px] w-[430px] border-b border-[#d2d2d2] items-stretch"><div class="w-[27px] bg-[#f1f1f1] border-r border-[#ccc] flex items-center justify-center text-[13px] font-['Liberation_Mono']">10</div><div class="w-[152px] border-r border-[#ccc] flex items-center pl-[25px] text-[#1a1ae0]"><span class="text-[13px] font-['Liberation_Mono']">Y</span>向面筋</div><div class="w-[250px] flex items-center pl-[5px] text-[#999] text-[13px] whitespace-pre">( <b class="text-[#222]">Φ</b>8@200)</div></div>
    <div class="flex h-[23.74px] w-[430px] border-b border-[#d2d2d2] items-stretch"><div class="w-[27px] bg-[#f1f1f1] border-r border-[#ccc] flex items-center justify-center text-[13px] font-['Liberation_Mono']">11</div><div class="w-[152px] border-r border-[#ccc] flex items-center pl-[25px] text-[#1a1ae0]">坑壁水平筋</div><div class="w-[250px] flex items-center pl-[5px] text-[#999] text-[13px]"><b class="text-[#222]">Φ</b>6@150</div></div>
    <div class="flex h-[23.74px] w-[430px] border-b border-[#d2d2d2] items-stretch"><div class="w-[27px] bg-[#f1f1f1] border-r border-[#ccc] flex items-center justify-center text-[13px] font-['Liberation_Mono']">12</div><div class="w-[152px] border-r border-[#ccc] flex items-center pl-[25px] text-[#1a1ae0]"><span class="text-[13px] font-['Liberation_Mono']">X</span>向斜面钢筋</div><div class="w-[250px] flex items-center pl-[5px] text-[#999] text-[13px]"><b class="text-[#222]">Φ</b>8@200</div></div>
    <div class="flex h-[23.74px] w-[430px] border-b border-[#d2d2d2] items-stretch"><div class="w-[27px] bg-[#f1f1f1] border-r border-[#ccc] flex items-center justify-center text-[13px] font-['Liberation_Mono']">13</div><div class="w-[152px] border-r border-[#ccc] flex items-center pl-[25px] text-[#1a1ae0]"><span class="text-[13px] font-['Liberation_Mono']">Y</span>向斜面钢筋</div><div class="w-[250px] flex items-center pl-[5px] text-[#999] text-[13px] whitespace-pre">( <b class="text-[#222]">Φ</b>8@200)</div></div>
    <div class="flex h-[23.74px] w-[430px] border-b border-[#d2d2d2] items-stretch"><div class="w-[27px] bg-[#f1f1f1] border-r border-[#ccc] flex items-center justify-center text-[13px] font-['Liberation_Mono']">14</div><div class="w-[152px] border-r border-[#ccc] flex items-center pl-[25px]">备注</div><div class="w-[250px]"></div></div>

    <div class="flex h-[23.74px] w-[430px] border-b border-[#d2d2d2] items-stretch"><div class="w-[27px] bg-[#f1f1f1] border-r border-[#ccc] flex items-center justify-center text-[13px] font-['Liberation_Mono']">15</div><div class="w-[152px] border-r border-[#ccc] flex items-center pl-[4px] text-[#8a8a8a]"><span class="w-[15px] h-[15px] border border-[#aaa] bg-white text-[#222] flex items-center justify-center mr-[6px]">−</span>其它属性</div><div class="w-[250px]"></div></div>
    <div class="flex h-[23.74px] w-[430px] border-b border-[#d2d2d2] items-stretch"><div class="w-[27px] bg-[#f1f1f1] border-r border-[#ccc] flex items-center justify-center text-[13px] font-['Liberation_Mono']">16</div><div class="w-[152px] border-r border-[#ccc] flex items-center pl-[11px] text-[#1a1ae0]"><svg width="27" height="24" class="shrink-0" fill="none" stroke="#b0b0b0"><path d="M.5 0V24M.5 12H20"/></svg>其它钢筋</div><div class="w-[250px]"></div></div>
    <div class="flex h-[23.74px] w-[430px] border-b border-[#d2d2d2] items-stretch"><div class="w-[27px] bg-[#f1f1f1] border-r border-[#ccc] flex items-center justify-center text-[13px] font-['Liberation_Mono']">17</div><div class="w-[152px] border-r border-[#ccc] flex items-center pl-[11px]"><svg width="27" height="24" class="shrink-0" fill="none" stroke="#b0b0b0"><path d="M.5 0V24M.5 12H20"/></svg>取板带同向钢筋</div><div class="w-[250px] flex items-center pl-[2px] text-[#999]">否</div></div>
    <div class="flex h-[23.74px] w-[430px] border-b border-[#d2d2d2] items-stretch"><div class="w-[27px] bg-[#f1f1f1] border-r border-[#ccc] flex items-center justify-center text-[13px] font-['Liberation_Mono']">18</div><div class="w-[152px] border-r border-[#ccc] flex items-center pl-[11px]"><svg width="27" height="24" class="shrink-0" fill="none" stroke="#b0b0b0"><path d="M.5 0V24M.5 12H20"/></svg>取筏板/承台同</div><div class="w-[250px] flex items-center pl-[2px] text-[#999]">否</div></div>
    <div class="flex h-[23.74px] w-[430px] border-b border-[#d2d2d2] items-stretch"><div class="w-[27px] bg-[#f1f1f1] border-r border-[#ccc] flex items-center justify-center text-[13px] font-['Liberation_Mono']">19</div><div class="w-[152px] border-r border-[#ccc] flex items-center pl-[11px]"><svg width="27" height="24" class="shrink-0" fill="none" stroke="#b0b0b0"><path d="M.5 0V24M.5 12H20"/></svg>汇总信息</div><div class="w-[250px] flex items-center pl-[2px] text-[#999]">集水坑</div></div>
    <div class="flex h-[23.74px] w-[430px] border-b border-[#d2d2d2] items-stretch"><div class="w-[27px] bg-[#f1f1f1] border-r border-[#ccc] flex items-center justify-center text-[13px] font-['Liberation_Mono']">20</div><div class="w-[152px] border-r border-[#ccc] flex items-center pl-[11px]"><svg width="27" height="24" class="shrink-0" fill="none" stroke="#b0b0b0"><path d="M.5 0V24M.5 12H20"/></svg>保护层厚度<span class="text-[11px] font-['Liberation_Mono']">(mm)</span></div><div class="w-[250px] flex items-center pl-[2px] text-[#999] text-[13px]">(40)</div></div>
    <div class="flex h-[23.74px] w-[430px] border-b border-[#d2d2d2] items-stretch"><div class="w-[27px] bg-[#f1f1f1] border-r border-[#ccc] flex items-center justify-center text-[13px] font-['Liberation_Mono']">21</div><div class="w-[152px] border-r border-[#ccc] flex items-center pl-[11px]"><svg width="27" height="24" class="shrink-0" fill="none" stroke="#b0b0b0"><path d="M.5 0V24M.5 12H20"/></svg>计算设置</div><div class="w-[250px] flex items-center pl-[2px] text-[#999]">按默认计算设置计算</div></div>
    <div class="flex h-[23.74px] w-[430px] border-b border-[#d2d2d2] items-stretch"><div class="w-[27px] bg-[#f1f1f1] border-r border-[#ccc] flex items-center justify-center text-[13px] font-['Liberation_Mono']">22</div><div class="w-[152px] border-r border-[#ccc] flex items-center pl-[11px]"><svg width="27" height="24" class="shrink-0" fill="none" stroke="#b0b0b0"><path d="M.5 0V24M.5 12H20"/></svg>节点设置</div><div class="w-[250px] flex items-center pl-[2px] text-[#999]">按默认节点设置计算</div></div>
    <div class="flex h-[23.74px] w-[430px] border-b border-[#d2d2d2] items-stretch"><div class="w-[27px] bg-[#f1f1f1] border-r border-[#ccc] flex items-center justify-center text-[13px] font-['Liberation_Mono']">23</div><div class="w-[152px] border-r border-[#ccc] flex items-center pl-[11px]"><svg width="27" height="24" class="shrink-0" fill="none" stroke="#b0b0b0"><path d="M.5 0V12H20"/></svg>搭接设置</div><div class="w-[250px] flex items-center pl-[2px] text-[#999]">按默认搭接设置计算</div></div>
    <div class="flex h-[23.74px] w-[430px] border-b border-[#d2d2d2] items-stretch"><div class="w-[27px] bg-[#f1f1f1] border-r border-[#ccc] flex items-center justify-center text-[13px] font-['Liberation_Mono']">24</div><div class="w-[152px] border-r border-[#ccc] flex items-center pl-[4px] text-[#8a8a8a]"><span class="w-[15px] h-[15px] border border-[#aaa] bg-white text-[#222] flex items-center justify-center mr-[6px]">+</span>锚固搭接</div><div class="w-[250px]"></div></div>
    <div class="flex h-[23.74px] w-[430px] border-b border-[#d2d2d2] items-stretch"><div class="w-[27px] bg-[#f1f1f1] border-r border-[#ccc] flex items-center justify-center text-[13px] font-['Liberation_Mono']">39</div><div class="w-[152px] border-r border-[#ccc] flex items-center pl-[4px] text-[#8a8a8a]"><span class="w-[15px] h-[15px] border border-[#aaa] bg-white text-[#222] flex items-center justify-center mr-[6px]">−</span>显示样式</div><div class="w-[250px]"></div></div>
    <div class="flex h-[23.74px] w-[430px] border-b border-[#d2d2d2] items-stretch"><div class="w-[27px] bg-[#f1f1f1] border-r border-[#ccc] flex items-center justify-center text-[13px] font-['Liberation_Mono']">40</div><div class="w-[152px] border-r border-[#ccc] flex items-center pl-[11px]"><svg width="27" height="24" class="shrink-0" fill="none" stroke="#b0b0b0"><path d="M.5 0V24M.5 12H20"/></svg>边框颜色</div><div class="w-[250px] flex items-center pl-[5px] pr-[5px]"><div class="w-full h-[17px] border border-[#333] bg-white"></div></div></div>
    <div class="flex h-[23.74px] w-[430px] border-b border-[#d2d2d2] items-stretch"><div class="w-[27px] bg-[#f1f1f1] border-r border-[#ccc] flex items-center justify-center text-[13px] font-['Liberation_Mono']">41</div><div class="w-[152px] border-r border-[#ccc] flex items-center pl-[11px]"><svg width="27" height="24" class="shrink-0" fill="none" stroke="#b0b0b0"><path d="M.5 0V24M.5 12H20"/></svg>填充颜色</div><div class="w-[250px] flex items-center pl-[5px] pr-[5px]"><div class="w-full h-[17px] border border-[#555] bg-[#ff00ff]"></div></div></div>
    <div class="flex h-[23.74px] w-[430px] border-b border-[#d2d2d2] items-stretch"><div class="w-[27px] bg-[#f1f1f1] border-r border-[#ccc] flex items-center justify-center text-[13px] font-['Liberation_Mono']">42</div><div class="w-[152px] border-r border-[#ccc] flex items-center pl-[11px]"><svg width="27" height="24" class="shrink-0" fill="none" stroke="#b0b0b0"><path d="M.5 0V12H20"/></svg>不透明度</div><div class="w-[250px] flex items-center pl-[2px] text-[#999] text-[13px]">100</div></div>
  </div>
</div>
</div>
</body>
</html>
